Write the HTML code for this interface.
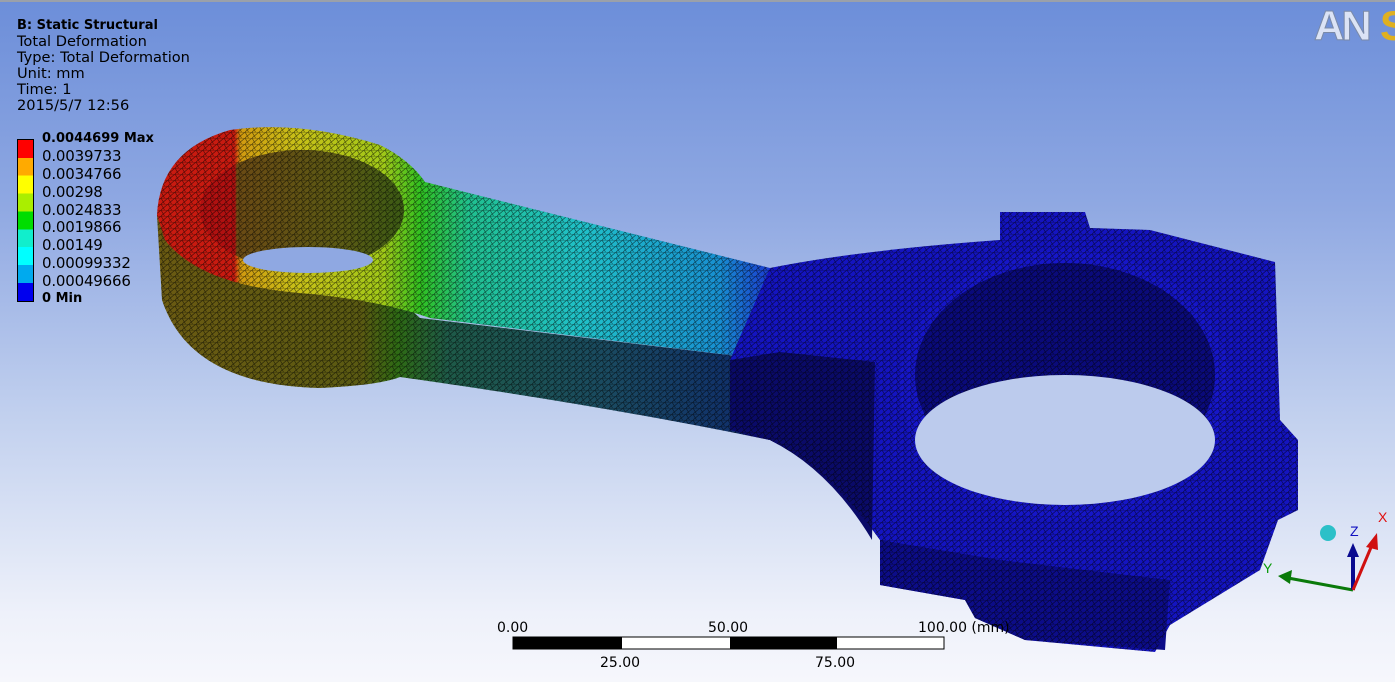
<!DOCTYPE html>
<html><head><meta charset="utf-8">
<style>
html,body{margin:0;padding:0;width:1395px;height:682px;overflow:hidden}
body{background:linear-gradient(#6c8ed9 0%,#8fa8e2 30%,#c0cfee 60%,#eef1fa 90%,#f6f7fc 100%);font-family:"DejaVu Sans",sans-serif;position:relative}
.t{position:absolute;left:17px;font-size:14.6px;color:#000;line-height:16px}
.lg{position:absolute;left:42px;font-size:15px;line-height:16px;color:#000;letter-spacing:-0.2px}
</style></head><body>
<div style="position:absolute;left:0;top:0;width:1395px;height:2px;background:#9aa0aa"></div>
<div class="t" style="top:18px;font-weight:bold;font-size:13px">B: Static Structural</div>
<div class="t" style="top:34px">Total Deformation</div>
<div class="t" style="top:50px">Type: Total Deformation</div>
<div class="t" style="top:66px">Unit: mm</div>
<div class="t" style="top:82px">Time: 1</div>
<div class="t" style="top:98px">2015/5/7 12:56</div>
<div style="position:absolute;left:17px;top:139px;width:15px;height:161px;border:1px solid #000;background:linear-gradient(#f00 0 11.1%,#fa0 11.1% 22.2%,#ff0 22.2% 33.3%,#ae0 33.3% 44.4%,#0d0 44.4% 55.5%,#1ec 55.5% 66.6%,#0ff 66.6% 77.7%,#0ae 77.7% 88.8%,#00e 88.8%)"></div>
<div class="lg" style="top:131px;font-weight:bold;font-size:13px;letter-spacing:0">0.0044699 Max</div>
<div class="lg" style="top:148px">0.0039733</div>
<div class="lg" style="top:166px">0.0034766</div>
<div class="lg" style="top:184px">0.00298</div>
<div class="lg" style="top:202px">0.0024833</div>
<div class="lg" style="top:219px">0.0019866</div>
<div class="lg" style="top:237px">0.00149</div>
<div class="lg" style="top:255px">0.00099332</div>
<div class="lg" style="top:273px">0.00049666</div>
<div class="lg" style="top:291px;font-weight:bold;font-size:13px;letter-spacing:0">0 Min</div>

<svg width="1395" height="682" style="position:absolute;left:0;top:0">
<defs>
<linearGradient id="side" gradientUnits="userSpaceOnUse" x1="160" x2="880" y1="0" y2="0">
<stop offset="0" stop-color="#6a5a12"/><stop offset="0.28" stop-color="#5a5a12"/><stop offset="0.33" stop-color="#2e6a14"/><stop offset="0.4" stop-color="#1e5a48"/><stop offset="0.62" stop-color="#1a4a60"/><stop offset="0.8" stop-color="#10306a"/><stop offset="0.82" stop-color="#0a0a5e"/><stop offset="1" stop-color="#0a0a6a"/>
</linearGradient>
<linearGradient id="top" gradientUnits="userSpaceOnUse" x1="160" x2="780" y1="0" y2="0">
<stop offset="0" stop-color="#c81a10"/><stop offset="0.12" stop-color="#c81a10"/><stop offset="0.13" stop-color="#d09a10"/><stop offset="0.22" stop-color="#c8c018"/><stop offset="0.36" stop-color="#a0c818"/><stop offset="0.42" stop-color="#30c020"/><stop offset="0.5" stop-color="#20c090"/><stop offset="0.68" stop-color="#20c0c8"/><stop offset="0.9" stop-color="#1890d0"/><stop offset="0.98" stop-color="#1a40d0"/><stop offset="1" stop-color="#1414c0"/>
</linearGradient>
<linearGradient id="wall" gradientUnits="userSpaceOnUse" x1="200" x2="405" y1="0" y2="0">
<stop offset="0" stop-color="#b01010"/><stop offset="0.17" stop-color="#b01010"/><stop offset="0.18" stop-color="#6a4a14"/><stop offset="0.7" stop-color="#5a5a14"/><stop offset="1" stop-color="#3a5a14"/>
</linearGradient>
<pattern id="mesh" width="7" height="6" patternUnits="userSpaceOnUse">
<path d="M0 0L7 0M0 6L7 0M0 0L3.5 6" stroke="#000" stroke-width="0.7" opacity="0.55" fill="none"/>
</pattern>
<path id="sside" d="M157 215 L162 300 Q190 385 320 388 Q380 385 400 377 Q600 405 770 440 Q830 470 880 540 L880 360 L770 360 L420 318 L400 300 Z"/>
<path id="stop" d="M157 215 Q160 150 230 130 Q300 120 380 145 Q410 160 425 182 L770 268 L770 360 L430 318 Q380 300 300 293 Q200 285 165 240Z"/>
<path id="big" d="M730 360 L770 268 Q860 250 1000 240 L1000 212 L1085 212 L1090 228 L1150 230 L1275 262 L1280 420 L1298 440 L1298 510 L1278 520 L1260 570 L1170 625 L1155 652 L1025 640 L975 618 L965 600 L880 585 L880 540 Q830 470 770 440 L730 430 Z"/>
</defs>
<use href="#sside" fill="url(#side)"/><use href="#sside" fill="url(#mesh)"/>
<use href="#stop" fill="url(#top)"/><use href="#stop" fill="url(#mesh)"/>
<ellipse cx="302" cy="210" rx="102" ry="60" fill="url(#wall)"/>
<ellipse cx="302" cy="210" rx="102" ry="60" fill="url(#mesh)"/>
<ellipse cx="308" cy="260" rx="65" ry="13" fill="#8fa8e2"/>
<use href="#big" fill="#1414c0"/>
<path d="M730 360 L780 352 L875 362 L872 540 Q830 470 770 440 L730 430Z" fill="#0a0a68"/>
<path d="M880 540 L1000 560 L1170 580 L1165 650 L1025 640 L975 618 L965 600 L880 585Z" fill="#0c0c88"/>
<ellipse cx="1065" cy="385" rx="165" ry="135" fill="#1616c8"/>
<ellipse cx="1065" cy="375" rx="150" ry="112" fill="#0a0a7a"/>
<use href="#big" fill="url(#mesh)"/>
<ellipse cx="1065" cy="440" rx="150" ry="65" fill="#bccbed"/>
<rect x="513" y="637" width="431" height="12" fill="#fff" stroke="#000"/>
<rect x="513" y="637" width="109" height="12" fill="#000"/>
<rect x="730" y="637" width="107" height="12" fill="#000"/>
<g font-family="DejaVu Sans,sans-serif" font-size="14">
<text x="497" y="632">0.00</text><text x="708" y="632">50.00</text><text x="918" y="632">100.00 (mm)</text>
<text x="600" y="667">25.00</text><text x="815" y="667">75.00</text>
</g>
<circle cx="1328" cy="533" r="8" fill="#2cc0c8"/>
<line x1="1353" y1="590" x2="1288" y2="578" stroke="#0a7a0a" stroke-width="3"/>
<path d="M1278 576 L1292 570 L1290 584Z" fill="#0a7a0a"/>
<line x1="1353" y1="590" x2="1353" y2="555" stroke="#0a0a90" stroke-width="4"/>
<path d="M1347 557 L1353 543 L1359 557Z" fill="#0a0a90"/>
<line x1="1353" y1="590" x2="1372" y2="545" stroke="#d01010" stroke-width="3"/>
<path d="M1366 547 L1377 533 L1378 550Z" fill="#d01010"/>
<g font-family="Liberation Sans,sans-serif" font-size="14">
<text x="1263" y="573" fill="#0a9a0a">Y</text><text x="1350" y="536" fill="#1010c0">Z</text><text x="1378" y="522" fill="#e01010">X</text>
</g>
<text x="1314" y="40" font-family="Liberation Sans,sans-serif" font-weight="bold" font-size="42" fill="#dbe3f5" stroke="#7a8aa8" stroke-width="1" letter-spacing="-3">AN</text>
<text x="1380" y="40" font-family="Liberation Sans,sans-serif" font-weight="bold" font-size="42" fill="#e0b020">S</text>
</svg>
</body></html>
